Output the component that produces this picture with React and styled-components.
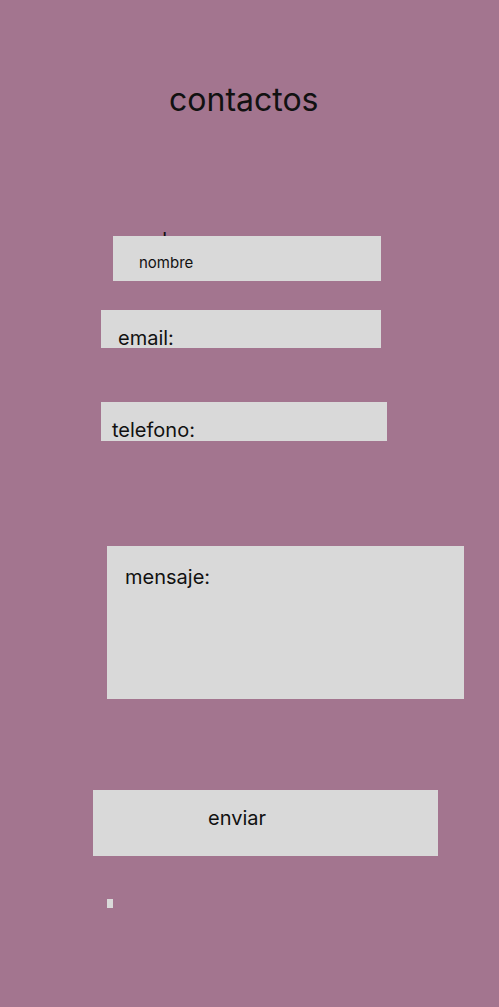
import React from "react";
import styled, { createGlobalStyle } from "styled-components";

const Global = createGlobalStyle`
  html, body { margin: 0; padding: 0; background: #a3758f; }
  body { font-family: Inter, "Noto Sans", sans-serif; color: #111; }
`;

const Page = styled.main`
  width: 499px;
  min-height: 1007px;
  background: #a3758f;
  display: flex;
  flex-direction: column;
  align-items: flex-start;
  box-sizing: border-box;
  padding-top: 80px;
`;

const Title = styled.h1`
  margin: 0 0 0 169px;
  font-size: 32px;
  font-weight: 400;
  line-height: 40px;
  color: #111;
`;

const Field = styled.div`
  position: relative;
  margin-left: ${(p) => p.$left}px;
  margin-top: ${(p) => p.$top}px;
`;

const HiddenLabel = styled.span`
  position: absolute;
  left: ${(p) => p.$x}px;
  top: ${(p) => p.$y}px;
  font-size: 20px;
  line-height: 24px;
  white-space: nowrap;
`;

const Box = styled.div`
  position: relative;
  width: ${(p) => p.$w}px;
  height: ${(p) => p.$h}px;
  background: #d9d9d9;
  box-sizing: border-box;
  padding: ${(p) => p.$pad};
  font-size: ${(p) => p.$fs || 20}px;
  line-height: 20px;
  overflow: hidden;
  white-space: nowrap;
`;

const Button = styled.button`
  margin-left: 93px;
  margin-top: 91px;
  width: 345px;
  height: 66px;
  border: 0;
  background: #d9d9d9;
  font-family: Inter, "Noto Sans", sans-serif;
  font-size: 20px;
  color: #111;
  padding: 16px 0 0 115px;
  text-align: left;
  line-height: 24px;
  display: flex;
  align-items: flex-start;
`;

const Dot = styled.div`
  margin-left: 107px;
  margin-top: 43px;
  width: 6px;
  height: 9px;
  background: #d9d9d9;
`;

export default function App() {
  return (
    <>
      <Global />
      <Page>
        <Title>contactos</Title>
        <Field $left={113} $top={116}>
          <HiddenLabel $x={8} $y={-8}>nombre:</HiddenLabel>
          <Box $w={268} $h={45} $pad="17px 0 0 26px" $fs={15}>nombre</Box>
        </Field>
        <Field $left={101} $top={29}>
          <Box $w={280} $h={38} $pad="18px 0 0 17px">email:</Box>
        </Field>
        <Field $left={101} $top={54}>
          <Box $w={286} $h={39} $pad="18px 0 0 11px">telefono:</Box>
        </Field>
        <Field $left={107} $top={105}>
          <Box $w={357} $h={153} $pad="21px 0 0 18px">mensaje:</Box>
        </Field>
        <Button>enviar</Button>
        <Dot />
      </Page>
    </>
  );
}
